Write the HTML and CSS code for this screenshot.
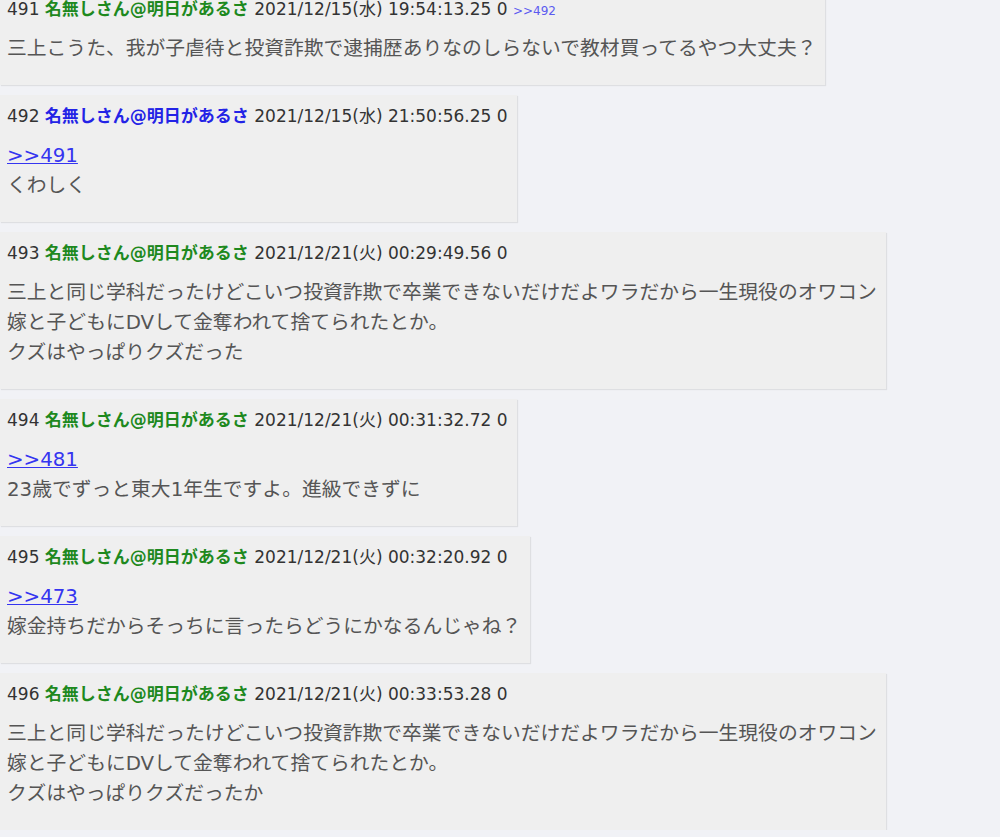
FILE: index.html
```html
<!DOCTYPE html>
<html lang="ja">
<head>
  <meta charset="UTF-8"/>
  <meta name="viewport" content="width=device-width, initial-scale=1.0"/>
  <title>三上こうた</title>
  <link rel="stylesheet" href="styles.css">
</head>
<body>
  <div class="thread">
    <div class="post">
      <div class="meta">491 <span class="name">名無しさん@明日があるさ</span> 2021/12/15(水) 19:54:13.25 0 <a class="reply" href="#p492">&gt;&gt;492</a></div>
      <div class="message">三上こうた、我が子虐待と投資詐欺で逮捕歴ありなのしらないで教材買ってるやつ大丈夫？</div>
    </div>
    <div class="post" id="p492">
      <div class="meta">492 <span class="name sage">名無しさん@明日があるさ</span> 2021/12/15(水) 21:50:56.25 0</div>
      <div class="message"><a href="#">&gt;&gt;491</a><br>くわしく</div>
    </div>
    <div class="post">
      <div class="meta">493 <span class="name">名無しさん@明日があるさ</span> 2021/12/21(火) 00:29:49.56 0</div>
      <div class="message">三上と同じ学科だったけどこいつ投資詐欺で卒業できないだけだよワラだから一生現役のオワコン<br>嫁と子どもにDVして金奪われて捨てられたとか。<br>クズはやっぱりクズだった</div>
    </div>
    <div class="post">
      <div class="meta">494 <span class="name">名無しさん@明日があるさ</span> 2021/12/21(火) 00:31:32.72 0</div>
      <div class="message"><a href="#">&gt;&gt;481</a><br>23歳でずっと東大1年生ですよ。進級できずに</div>
    </div>
    <div class="post">
      <div class="meta">495 <span class="name">名無しさん@明日があるさ</span> 2021/12/21(火) 00:32:20.92 0</div>
      <div class="message"><a href="#">&gt;&gt;473</a><br>嫁金持ちだからそっちに言ったらどうにかなるんじゃね？</div>
    </div>
    <div class="post">
      <div class="meta">496 <span class="name">名無しさん@明日があるさ</span> 2021/12/21(火) 00:33:53.28 0</div>
      <div class="message">三上と同じ学科だったけどこいつ投資詐欺で卒業できないだけだよワラだから一生現役のオワコン<br>嫁と子どもにDVして金奪われて捨てられたとか。<br>クズはやっぱりクズだったか</div>
    </div>
  </div>
</body>
</html>
```
FILE: styles.css
```css
body { margin: 0; background-color: #f1f2f6; font-family: "DejaVu Sans", "Noto Sans CJK JP", sans-serif; color: #333; overflow: hidden; }
.thread { margin-top: -12px; display: flex; flex-direction: column; align-items: flex-start; gap: 10px; }
.post { background-color: #efefef; padding: 10px 9px 21px 7px; box-shadow: 1px 1px 1px rgba(0,0,0,0.08); }
.meta { font-size: 17px; line-height: 22px; height: 22px; color: #333; white-space: nowrap; }
.name { color: #1e891e; font-weight: bold; }
.name.sage { color: #2323e6; }
.reply { font-size: 12px; line-height: 1; color: #5b5bf0; text-decoration: none; }
.message { margin-top: 14px; font-size: 19.8px; line-height: 30px; color: #555; white-space: nowrap; }
.message a { color: #3535f0; }
```
